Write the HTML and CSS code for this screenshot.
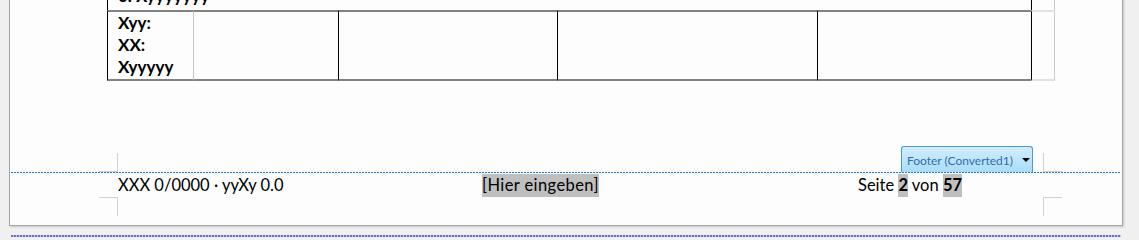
FILE: index.html
```html
<!DOCTYPE html>
<html lang="de">
<head>
    <meta charset="UTF-8">
    <meta name="viewport" content="width=device-width, initial-scale=1.0">
    <title>Fußzeile</title>
    <link rel="stylesheet" href="styles.css">
</head>
<body>

<div class="page">
    <div class="tbl">
        <div class="row row-prev">
            <div class="cell c-full">0. Xyyyyyyy</div>
            <div class="cell c-end"></div>
        </div>
        <div class="row row-main">
            <div class="cell c1">Xyy:<br>XX:<br>Xyyyyy</div>
            <div class="cell c2"></div>
            <div class="cell c3"></div>
            <div class="cell c4"></div>
            <div class="cell c5"></div>
            <div class="cell c-end"></div>
        </div>
    </div>

    <div class="footer-head">
        <span class="mark mark-tl"></span>
        <div class="footer-tab">Footer (Converted1)<span class="caret"></span></div>
        <span class="mark mark-tr"></span>
    </div>
    <div class="footer-rule"></div>
    <div class="footer-line">
        <span>XXX 0/0000 · yyXy 0.0</span>
        <span><span class="field field-wide">[Hier eingeben]</span></span>
        <span>Seite <b class="field">2</b> von <b class="field">57</b></span>
    </div>
    <div class="footer-foot">
        <span class="mark mark-bl"></span>
        <span class="mark mark-br"></span>
    </div>
</div>
<div class="page-break"></div>

</body>
</html>
```

FILE: styles.css
```css
body {
    margin: 0;
    background: #f0f0f0;
    font-family: "Lato", "Liberation Sans", sans-serif;
    color: #000;
    overflow: hidden;
}
.page {
    box-sizing: border-box;
    margin: -15px 0 0 9px;
    width: 1114px;
    height: 241px;
    background: #fcfdfc;
    border: 1px solid #a6a6a6;
    border-top: none;
    box-shadow: 1px 1px 2px rgba(0, 0, 0, 0.18);
}

/* table */
.tbl {
    margin-left: 97px;
}
.row {
    display: flex;
}
.cell {
    box-sizing: border-box;
    border-left: 1px solid #000;
    font-weight: bold;
    font-size: 17px;
    line-height: 22px;
}
.row-prev .cell {
    height: 25px;
}
.c-full {
    width: 924px;
    padding: 0 0 3px 10px;
    display: flex;
    align-items: flex-end;
}
.c-end {
    width: 24px;
    border-right: 1px solid #c8c8c8;
}
.row-main .cell {
    height: 71px;
    border-top: 2px solid #828282;
    border-bottom: 2px solid #828282;
}
.row-main .c-end {
    border-top-color: #e2e2e2;
    border-bottom-color: #e2e2e2;
}
.c1 {
    width: 86px;
    padding-left: 10px;
}
.c2 {
    width: 145px;
    border-left-color: #c4c4c4 !important;
}
.c3 {
    width: 219px;
}
.c4 {
    width: 260px;
}
.c5 {
    width: 214px;
}

/* footer */
.mark {
    box-sizing: border-box;
    width: 19px;
    height: 19px;
    border: 0 solid #d2d2d2;
}
.footer-head {
    margin-top: 65px;
    height: 26px;
    display: flex;
    align-items: flex-end;
    padding: 0 60px 0 89px;
}
.mark-tl {
    border-right-width: 1px;
    border-bottom-width: 1px;
}
.mark-tr {
    margin-left: 10px;
    border-left-width: 1px;
    border-bottom-width: 1px;
}
.footer-tab {
    box-sizing: border-box;
    margin-left: auto;
    width: 132px;
    height: 26px;
    padding: 1px 0 0 5px;
    display: flex;
    align-items: center;
    border: 1px solid #4a9ad6;
    border-bottom: none;
    border-radius: 3px 3px 0 0;
    background: linear-gradient(#d3edfc, #a9dcfa);
    color: #2f6fa8;
    font-size: 12px;
}
.caret {
    margin-left: 9px;
    border-left: 4px solid transparent;
    border-right: 4px solid transparent;
    border-top: 4px solid #000;
}
.footer-rule {
    height: 1px;
    margin: 0 1px;
    background: repeating-linear-gradient(90deg, #1878c6 0 2px, transparent 2px 3px);
}
.footer-line {
    height: 24px;
    box-sizing: border-box;
    padding: 1px 0 0 108px;
    display: grid;
    grid-template-columns: 364px 376px auto;
    align-items: start;
    font-size: 16.5px;
    line-height: 23px;
}
.field {
    display: inline-block;
    background: #bfbfbf;
}
.field-wide {
    letter-spacing: 0.4px;
}
.footer-foot {
    display: flex;
    justify-content: space-between;
    padding: 0 60px 0 89px;
}
.mark-bl {
    border-top-width: 1px;
    border-right-width: 1px;
}
.mark-br {
    border-top-width: 1px;
    border-left-width: 1px;
}
.page-break {
    margin: 9px 0 0 11px;
    width: 1110px;
    height: 2px;
    background: repeating-linear-gradient(90deg, #6b6bd6 0 2px, #c4c4ee 2px 3px);
}
```
